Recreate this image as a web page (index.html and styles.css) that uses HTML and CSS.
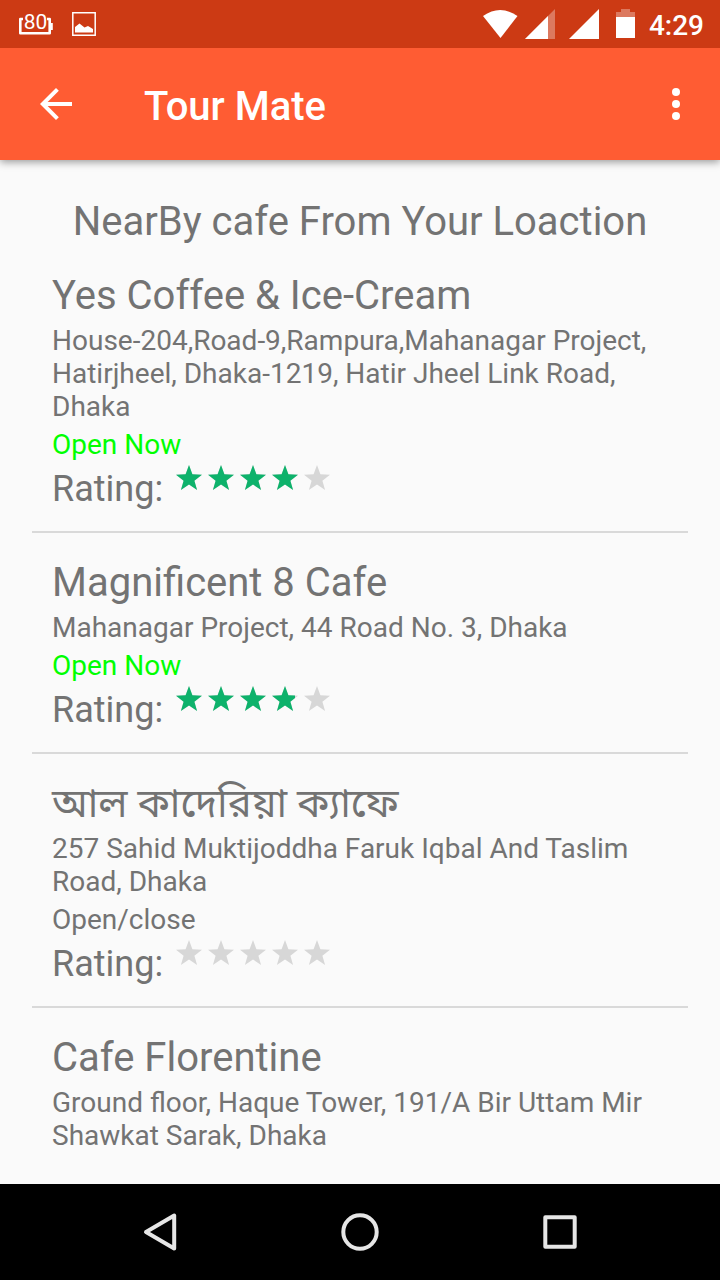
FILE: index.html
```html
<!DOCTYPE html>
<html lang="en">
<head>
<meta charset="utf-8">
<meta name="viewport" content="width=device-width, initial-scale=1">
<title>Tour Mate</title>
<link rel="stylesheet" href="styles.css">
</head>
<body>
<svg class="defs" aria-hidden="true">
  <symbol id="stars" viewBox="0 0 160 32">
    <path id="star" d="M16 3l3.4 9.3 9.6.4-7.6 6 2.7 9.3-8.1-5.4L7.9 28l2.7-9.3-7.6-6 9.6-.4z"/>
    <use href="#star" x="32"/><use href="#star" x="64"/><use href="#star" x="96"/><use href="#star" x="128"/>
  </symbol>
</svg>
<div class="screen">
  <div class="status">
    <div class="status-group notices">
      <div class="charge"><svg width="34" height="22" viewBox="0 0 34 22" fill="none" stroke="#fff"><path d="M4 6H1.300v14.200h29.400V6H28" stroke-width="2.600" stroke-linejoin="round"/><path d="M32.300 10v7" stroke-width="3"/></svg><span class="charge-value">80</span></div>
      <svg width="24" height="24" viewBox="0 0 24 24"><path d="M.8.8h22.400v22.400H.8z" fill="none" stroke="#fff" stroke-width="1.500"/><path d="M3 20.500V15l4.500-3.500 5 4 3.500-1.500 5 3v3.500z" fill="#fff"/></svg>
    </div>
    <div class="status-group">
      <svg width="116" height="32" viewBox="0 0 116 32" fill="#fff"><path d="M0 8Q17-4 34.500 8L17.500 30z"/><path d="M72 1v30H42z" opacity=".32"/><path d="M65 8v23H42z"/><path d="M116 1v30H86z"/></svg>
      <svg class="battery" width="19" height="32" viewBox="0 0 19 32" fill="#fff"><path d="M0 4h5V1h9v3h5v5H0z" opacity=".32"/><path d="M0 9h19v21H0z"/></svg>
      <span class="clock">4:29</span>
    </div>
  </div>
  <header class="appbar">
    <button class="icon-button" type="button" aria-label="Back"><svg width="48" height="48" viewBox="0 0 24 24" fill="#fff"><path d="M20 11H7.830l5.590-5.590L12 4l-8 8 8 8 1.410-1.410L7.830 13H20z"/></svg></button>
    <h1 class="app-title">Tour Mate</h1>
    <button class="icon-button" type="button" aria-label="More options"><svg width="48" height="48" viewBox="0 0 24 24" fill="#fff"><circle cx="12" cy="6" r="2"/><circle cx="12" cy="12" r="2"/><circle cx="12" cy="18" r="2"/></svg></button>
  </header>
  <main class="content">
    <h2 class="heading">NearBy cafe From Your Loaction</h2>
    <ul class="places">
      <li class="place">
        <h3 class="name">Yes Coffee &amp; Ice-Cream</h3>
        <p class="detail">House-204,Road-9,Rampura,Mahanagar Project, Hatirjheel, Dhaka-1219, Hatir Jheel Link Road, Dhaka</p>
        <p class="detail open">Open Now</p>
        <div class="rating"><span>Rating:</span><div class="stars" role="img" aria-label="4 out of 5"><svg class="empty"><use href="#stars"/></svg><div class="filled" style="width:80%"><svg><use href="#stars"/></svg></div></div></div>
      </li>
      <li class="place">
        <h3 class="name">Magnificent 8 Cafe</h3>
        <p class="detail">Mahanagar Project, 44 Road No. 3, Dhaka</p>
        <p class="detail open">Open Now</p>
        <div class="rating"><span>Rating:</span><div class="stars" role="img" aria-label="3.8 out of 5"><svg class="empty"><use href="#stars"/></svg><div class="filled" style="width:76%"><svg><use href="#stars"/></svg></div></div></div>
      </li>
      <li class="place">
        <h3 class="name" lang="bn">আল কাদেরিয়া ক্যাফে</h3>
        <p class="detail">257 Sahid Muktijoddha Faruk Iqbal And Taslim Road, Dhaka</p>
        <p class="detail">Open/close</p>
        <div class="rating"><span>Rating:</span><div class="stars" role="img" aria-label="0 out of 5"><svg class="empty"><use href="#stars"/></svg></div></div>
      </li>
      <li class="place">
        <h3 class="name">Cafe Florentine</h3>
        <p class="detail">Ground floor, Haque Tower, 191/A Bir Uttam Mir Shawkat Sarak, Dhaka</p>
      </li>
    </ul>
  </main>
  <nav class="navbar" aria-label="System">
    <button class="icon-button" type="button" aria-label="Back"><svg width="40" height="40" viewBox="0 0 40 40"><path d="M34.200 3.500v33L6 20z"/></svg></button>
    <button class="icon-button" type="button" aria-label="Home"><svg width="40" height="40" viewBox="0 0 40 40"><circle cx="20" cy="20" r="16.700"/></svg></button>
    <button class="icon-button" type="button" aria-label="Recent apps"><svg width="40" height="40" viewBox="0 0 40 40"><path d="M5.300 5.300h29.400v29.400H5.300z"/></svg></button>
  </nav>
</div>
</body>
</html>
```
FILE: styles.css
```css
* { box-sizing: border-box; }
body, h1, h2, h3, p, ul { margin: 0; padding: 0; }
body {
  background: #fafafa;
  color: #737373;
  font-family: Roboto, "Noto Sans Bengali", "Noto Sans", sans-serif;
}
h1, h2, h3 { font-weight: 400; }
svg { display: block; }
.defs { position: absolute; width: 0; height: 0; }
.screen { display: flex; flex-direction: column; min-height: 100vh; }

.status {
  position: relative;
  z-index: 1;
  display: flex;
  justify-content: space-between;
  height: 48px;
  padding: 0 16px 0 19px;
  background: #cc3a14;
  color: #fff;
}
.status-group { display: flex; align-items: center; }
.notices { gap: 19px; }
.charge { position: relative; }
.charge-value {
  position: absolute;
  inset: -3px 1px auto 0;
  font-size: 21px;
  line-height: 24px;
  text-align: center;
}
.battery { margin: 0 14px 0 17px; }
.clock { font-size: 28px; font-weight: 500; line-height: 33px; padding-top: 2px; }

.appbar {
  display: flex;
  align-items: center;
  height: 112px;
  padding: 0 20px 0 32px;
  background: #ff5c33;
  color: #fff;
  box-shadow: 0 2px 8px rgba(0, 0, 0, 0.4);
}
.app-title {
  flex: 1;
  padding: 4px 0 0 64px;
  font-size: 40px;
  font-weight: 500;
  line-height: 47px;
}
.icon-button { padding: 0; border: 0; background: none; }

.content { flex: 1; padding: 38px 32px 0; }
.heading { font-size: 40px; line-height: 48px; text-align: center; }
.places { list-style: none; }
.place {
  display: flex;
  flex-direction: column;
  gap: 5px;
  padding: 26px 20px 19px;
  border-bottom: 2px solid #d9d9d9;
}
.place:last-child { border-bottom: 0; }
.name { font-size: 40px; line-height: 47px; }
.detail { font-size: 28px; line-height: 33px; }
.open { color: #00ff00; }
.rating { display: flex; gap: 10px; font-size: 36px; line-height: 46px; }
.stars { position: relative; width: 160px; height: 32px; margin-top: -4px; }
.stars svg { width: 160px; height: 32px; fill: #0db26b; }
.stars .empty { fill: #d7d7d7; }
.filled { position: absolute; inset: 0 auto 0 0; overflow: hidden; }

.navbar {
  display: flex;
  justify-content: center;
  align-items: center;
  gap: 160px;
  height: 96px;
  background: #000;
}
.navbar svg { fill: none; stroke: #e6e6e6; stroke-width: 4; stroke-linejoin: round; }
```
